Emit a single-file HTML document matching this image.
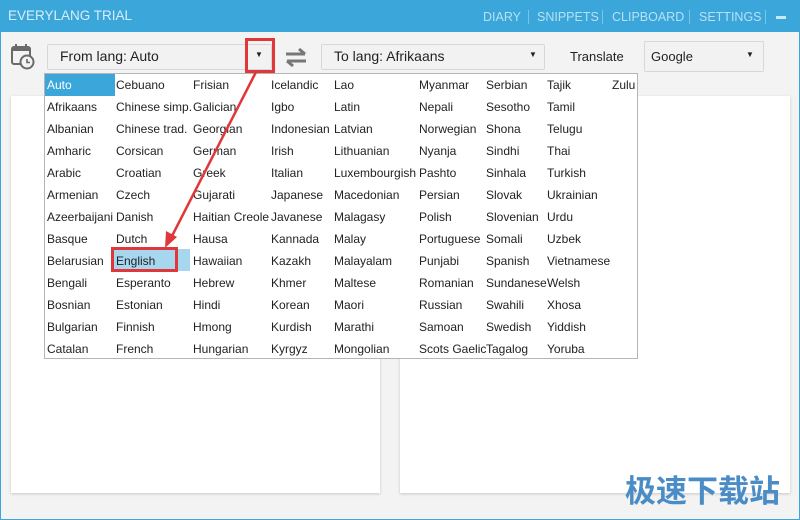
<!DOCTYPE html><html><head><meta charset="utf-8"><style>
*{margin:0;padding:0;box-sizing:border-box}
body{width:800px;height:520px;overflow:hidden;background:#f3f3f3;font-family:"Segoe UI","Liberation Sans","DejaVu Sans",sans-serif;position:relative;border:1px solid #3aa6da}
.a{position:absolute}
.title{left:-1px;top:-1px;width:800px;height:32px;background:#3aa6da}
.nav{color:#b8e0f4;font-size:12.5px;top:9px}
.sep{top:9px;width:1px;height:14px;background:#7cc3e6}
.panel{background:#fff;box-shadow:0 1px 3px rgba(0,0,0,.18)}
.sel{background:#f2f2f2;border:1px solid #d7d7d7;border-radius:2px;font-size:14px;color:#222}
.list{left:43px;top:72px;width:594px;height:286px;background:#fff;border:1px solid #b5b5b5}
.c{position:absolute;font-size:12px;color:#222;line-height:22px}
</style></head><body>
<div class="a title"></div>
<div class="a" style="left:7px;top:7px;color:#d7eef9;font-size:13.5px">EVERYLANG TRIAL</div>
<div class="a nav" style="left:482px">DIARY</div><div class="a sep" style="left:527px"></div>
<div class="a nav" style="left:536px">SNIPPETS</div><div class="a sep" style="left:601px"></div>
<div class="a nav" style="left:611px">CLIPBOARD</div><div class="a sep" style="left:688px"></div>
<div class="a nav" style="left:698px">SETTINGS</div><div class="a sep" style="left:764px"></div>
<div class="a" style="left:775px;top:15px;width:10px;height:3px;background:#c8e8f7"></div>
<svg class="a" style="left:10px;top:43px" width="24" height="26"><rect x="1" y="3" width="18" height="17" rx="2" fill="none" stroke="#6a6a6a" stroke-width="2"/><rect x="1" y="3" width="18" height="4" fill="#6a6a6a"/><rect x="4" y="0" width="2" height="5" fill="#6a6a6a"/><rect x="14" y="0" width="2" height="5" fill="#6a6a6a"/><circle cx="16" cy="18" r="6.5" fill="#f3f3f3" stroke="#6a6a6a" stroke-width="2"/><path d="M16 15v3.5h3" stroke="#6a6a6a" stroke-width="1.6" fill="none"/></svg>
<div class="a sel" style="left:46px;top:43px;width:225px;height:26px;padding:3px 12px">From lang: Auto</div>
<div class="a" style="left:254px;top:49px;font-size:8px;color:#222">▼</div>
<svg class="a" style="left:281px;top:45px" width="28" height="22"><path d="M4 8h19M17 3l6 5M24 15H5M11 20l-6-5" stroke="#777" stroke-width="3" fill="none"/></svg>
<div class="a sel" style="left:320px;top:43px;width:224px;height:26px;padding:3px 12px">To lang: Afrikaans</div>
<div class="a" style="left:528px;top:49px;font-size:8px;color:#222">▼</div>
<div class="a" style="left:569px;top:48px;font-size:13px;color:#222">Translate</div>
<div class="a sel" style="left:643px;top:40px;width:120px;height:31px;padding:7px 6px;font-size:13px">Google</div>
<div class="a" style="left:745px;top:49px;font-size:8px;color:#222">▼</div>
<div class="a panel" style="left:10px;top:95px;width:369px;height:397px"></div>
<div class="a panel" style="left:399px;top:95px;width:390px;height:397px"></div>
<div class="a list">
<div class="a" style="left:0;top:0;width:70px;height:22px;background:#3aa6da"></div>
<div class="a" style="left:67px;top:175px;width:78px;height:22px;background:#a7d6ef"></div>
<div class="c" style="left:2px;top:0"><span style="color:#fff">Auto</span><br>Afrikaans<br>Albanian<br>Amharic<br>Arabic<br>Armenian<br>Azeerbaijani<br>Basque<br>Belarusian<br>Bengali<br>Bosnian<br>Bulgarian<br>Catalan</div>
<div class="c" style="left:71px;top:0">Cebuano<br>Chinese simp.<br>Chinese trad.<br>Corsican<br>Croatian<br>Czech<br>Danish<br>Dutch<br>English<br>Esperanto<br>Estonian<br>Finnish<br>French</div>
<div class="c" style="left:148px;top:0">Frisian<br>Galician<br>Georgian<br>German<br>Greek<br>Gujarati<br>Haitian Creole<br>Hausa<br>Hawaiian<br>Hebrew<br>Hindi<br>Hmong<br>Hungarian</div>
<div class="c" style="left:226px;top:0">Icelandic<br>Igbo<br>Indonesian<br>Irish<br>Italian<br>Japanese<br>Javanese<br>Kannada<br>Kazakh<br>Khmer<br>Korean<br>Kurdish<br>Kyrgyz</div>
<div class="c" style="left:289px;top:0">Lao<br>Latin<br>Latvian<br>Lithuanian<br>Luxembourgish<br>Macedonian<br>Malagasy<br>Malay<br>Malayalam<br>Maltese<br>Maori<br>Marathi<br>Mongolian</div>
<div class="c" style="left:374px;top:0">Myanmar<br>Nepali<br>Norwegian<br>Nyanja<br>Pashto<br>Persian<br>Polish<br>Portuguese<br>Punjabi<br>Romanian<br>Russian<br>Samoan<br>Scots Gaelic</div>
<div class="c" style="left:441px;top:0">Serbian<br>Sesotho<br>Shona<br>Sindhi<br>Sinhala<br>Slovak<br>Slovenian<br>Somali<br>Spanish<br>Sundanese<br>Swahili<br>Swedish<br>Tagalog</div>
<div class="c" style="left:502px;top:0">Tajik<br>Tamil<br>Telugu<br>Thai<br>Turkish<br>Ukrainian<br>Urdu<br>Uzbek<br>Vietnamese<br>Welsh<br>Xhosa<br>Yiddish<br>Yoruba</div>
<div class="c" style="left:567px;top:0">Zulu</div>
</div>
<div class="a" style="left:244px;top:37px;width:30px;height:35px;border:3px solid #e0383a"></div>
<div class="a" style="left:110px;top:246px;width:67px;height:25px;border:3px solid #e0383a"></div>
<svg class="a" style="left:-1px;top:-1px" width="800" height="520"><path d="M256 72L172 236" stroke="#e0383a" stroke-width="2.5"/><path d="M165 248l1-17 11 6z" fill="#e0383a"/></svg>
<div class="a" style="left:624px;top:469px;font-size:31px;font-weight:bold;color:#4a8cc6;font-family:'Noto Sans CJK SC',sans-serif;line-height:38px">极速下载站</div>
</body></html>
